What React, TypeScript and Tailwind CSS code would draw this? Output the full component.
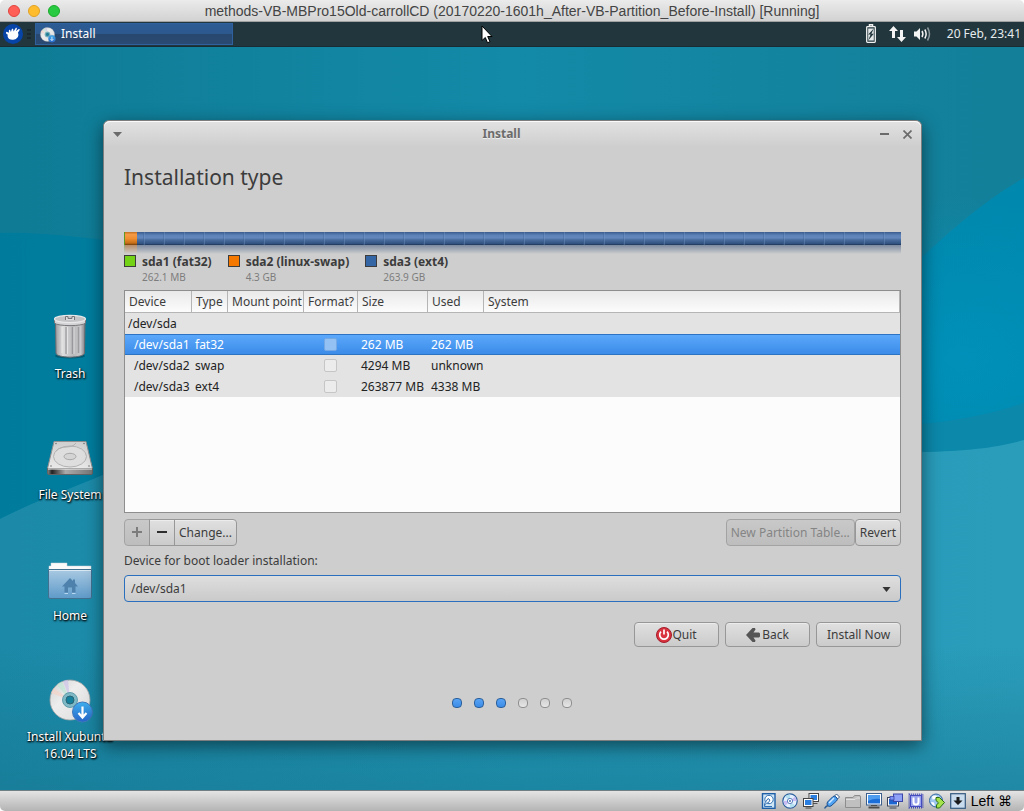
import { useId, useState, type ReactNode } from 'react';

const FONT = "font-['Noto_Sans',sans-serif]";
const MAC_FONT = "font-['Liberation_Sans','DejaVu_Sans',sans-serif]";

function Wallpaper() {
  return (
    <svg className="absolute inset-0 h-full w-full" viewBox="0 0 1024 743" preserveAspectRatio="none" aria-hidden="true">
      <defs>
        <linearGradient id="wpTop" x1="0" y1="0" x2="1" y2="0">
          <stop offset="0" stopColor="#0f7b95" />
          <stop offset="0.5" stopColor="#138aa8" />
          <stop offset="1" stopColor="#137f99" />
        </linearGradient>
        <linearGradient id="wpMid" x1="0" y1="0" x2="1" y2="0">
          <stop offset="0" stopColor="#007b9c" />
          <stop offset="0.5" stopColor="#0086a8" />
          <stop offset="1" stopColor="#0088ae" />
        </linearGradient>
        <linearGradient id="wpLowFade" x1="0" y1="0" x2="0" y2="1">
          <stop offset="0.6" stopColor="#14708a" stopOpacity="0" />
          <stop offset="1" stopColor="#14708a" stopOpacity="0.45" />
        </linearGradient>
        <linearGradient id="wpLow" x1="0" y1="0" x2="1" y2="0">
          <stop offset="0" stopColor="#1b89a7" />
          <stop offset="0.5" stopColor="#2198b6" />
          <stop offset="1" stopColor="#2a9dbb" />
        </linearGradient>
        <radialGradient id="wpGlow" cx="0.94" cy="0.42" r="0.22">
          <stop offset="0" stopColor="#0096c0" stopOpacity="0.6" />
          <stop offset="1" stopColor="#0096c0" stopOpacity="0" />
        </radialGradient>
      </defs>
      <rect width="1024" height="743" fill="url(#wpTop)" />
      <path d="M0 186C60 184 200 200 420 260C640 320 840 290 921 211C960 175 990 150 1024 131V743H0Z" fill="url(#wpMid)" />
      <rect width="1024" height="743" fill="url(#wpGlow)" />
      <path d="M0 472C40 452 75 440 110 425C300 340 780 390 921 377C970 372 1000 364 1024 356V743H0Z" fill="#0c88aa" />
      <path d="M0 472C40 452 75 440 110 425C300 350 780 400 921 405C970 404 1000 400 1024 393V743H0Z" fill="url(#wpLow)" />
      <path d="M0 472C40 452 75 440 110 425C300 350 780 400 921 405C970 404 1000 400 1024 393V743H0Z" fill="url(#wpLowFade)" />
    </svg>
  );
}

function TrashIcon() {
  return (
    <svg width="48" height="48" viewBox="0 0 48 48" aria-hidden="true">
      <defs>
        <linearGradient id="trBody" x1="0" y1="0" x2="1" y2="0">
          <stop offset="0" stopColor="#9b9b9f" />
          <stop offset="0.25" stopColor="#dededf" />
          <stop offset="0.6" stopColor="#b9b9bc" />
          <stop offset="0.85" stopColor="#c9c9cc" />
          <stop offset="1" stopColor="#7f7f85" />
        </linearGradient>
      </defs>
      <ellipse cx="24" cy="43" rx="15" ry="2.5" fill="#000" opacity="0.25" />
      <path d="M9.500 9L10 40C10 45.500 38 45.500 38.500 40L39 9Z" fill="url(#trBody)" stroke="#6c6c70" strokeWidth="1" />
      <path d="M20 14V41M26.500 14V41M32.500 14V40" stroke="#77777c" strokeWidth="1.500" opacity="0.5" />
      <path d="M21.500 14V41M28 14V41M16 14V40" stroke="#f3f3f3" strokeWidth="1" opacity="0.6" />
      <path d="M8.500 6.500V10C11 13.500 37 13.500 39.500 10V6.500Z" fill="#d4d4d6" stroke="#77777b" strokeWidth="1" />
      <ellipse cx="24" cy="6" rx="15.500" ry="3.600" fill="#c4c4c6" stroke="#e8e8ea" strokeWidth="1.200" />
      <path d="M19.500 7V3.500H22V5.500H26V3.500H28.500V7" fill="#dcdcde" stroke="#77777b" strokeWidth="1" />
    </svg>
  );
}

function DriveIcon() {
  return (
    <svg width="48" height="48" viewBox="0 0 48 48" aria-hidden="true">
      <defs>
        <linearGradient id="drTop" x1="0" y1="0" x2="0" y2="1">
          <stop offset="0" stopColor="#cfcfcf" />
          <stop offset="1" stopColor="#e9e9e9" />
        </linearGradient>
        <linearGradient id="drFront" x1="0" y1="0" x2="1" y2="0">
          <stop offset="0" stopColor="#8a8a8a" />
          <stop offset="0.1" stopColor="#222" />
          <stop offset="0.4" stopColor="#aaa" />
          <stop offset="1" stopColor="#777" />
        </linearGradient>
      </defs>
      <path d="M8 7.500H40L46.500 34.500H1.500Z" fill="url(#drTop)" stroke="#8f8f8f" />
      <ellipse cx="24" cy="22.500" rx="16.500" ry="10.500" fill="#dedede" stroke="#b3b3b3" />
      <ellipse cx="24" cy="22.500" rx="6" ry="3.200" fill="#d4d4d4" stroke="#a8a8a8" />
      <path d="M10 17C16 10 25 16 30 9" fill="none" stroke="#b0b0b0" />
      <path d="M1.500 34.500H46.500V39Q46.500 40.500 45 40.500H3Q1.500 40.500 1.500 39Z" fill="url(#drFront)" stroke="#636363" />
      <path d="M2 35H46" stroke="#f5f5f5" />
      <g fill="#777">
        <circle cx="10" cy="9.500" r="0.800" />
        <circle cx="38" cy="9.500" r="0.800" />
        <circle cx="5" cy="32" r="0.800" />
        <circle cx="43" cy="32" r="0.800" />
      </g>
    </svg>
  );
}

function HomeFolderIcon() {
  return (
    <svg width="48" height="48" viewBox="0 0 48 48" aria-hidden="true">
      <defs>
        <linearGradient id="foBody" x1="0" y1="0" x2="0" y2="1">
          <stop offset="0" stopColor="#a9c9e2" />
          <stop offset="1" stopColor="#5e9ac9" />
        </linearGradient>
      </defs>
      <path d="M3 16V11H5V8H21V11H45V16Z" fill="#fafafa" stroke="#c9d3da" strokeWidth="0.500" />
      <path d="M2.500 14.500H45.500V42Q45.500 43.500 44 43.500H4Q2.500 43.500 2.500 42Z" fill="url(#foBody)" stroke="#42708f" />
      <path d="M3 15.500H45" stroke="#d9e9f4" />
      <path d="M16 31.500L24 23L27 26V24.500H29V28L32 31.500H29.500V37.500H26V32.500H22V37.500H18.500V31.500Z" fill="#4e82ad" />
      <path d="M18.500 38.500H22M26 38.500H29.500" stroke="#b7d8f0" />
    </svg>
  );
}

function DiscIcon({ size }: { size: number }) {
  const id = useId();
  return (
    <svg width={size} height={size} viewBox="0 0 48 48" aria-hidden="true" className="shrink-0">
      <defs>
        <linearGradient id={`${id}d`} x1="0" y1="0" x2="1" y2="1">
          <stop offset="0" stopColor="#cfd0d0" />
          <stop offset="0.4" stopColor="#ededed" />
          <stop offset="1" stopColor="#dcdcdc" />
        </linearGradient>
        <linearGradient id={`${id}b`} x1="0" y1="0" x2="0" y2="1">
          <stop offset="0" stopColor="#3fb0ee" />
          <stop offset="1" stopColor="#2765c9" />
        </linearGradient>
      </defs>
      <circle cx="24" cy="24" r="20" fill={`url(#${id}d)`} stroke="#a5a5a5" strokeWidth="0.800" />
      <path d="M24 24L17 5A20 20 0 0 1 22 4Z" fill="#cfc4ea" opacity="0.7" />
      <path d="M24 24L11 9A20 20 0 0 1 16 5.500Z" fill="#bfe6d4" opacity="0.7" />
      <path d="M24 24L5 17A20 20 0 0 1 8 12Z" fill="#f3d3c8" opacity="0.7" />
      <circle cx="24" cy="24" r="7.500" fill="#7fb9c6" stroke="#4e8fa0" strokeWidth="0.800" />
      <circle cx="24" cy="24" r="4" fill="#16819c" stroke="#2b6575" />
      <circle cx="36.500" cy="36" r="10" fill={`url(#${id}b)`} stroke="#3f78bd" />
      <path d="M36.500 30.500V40M32.500 37L36.500 41.500L40.500 37" fill="none" stroke="#fff" strokeWidth="2.200" />
    </svg>
  );
}

function DesktopItem({ icon, children }: { icon: ReactNode; children: ReactNode }) {
  return (
    <a
      href="#desktop"
      className="flex flex-col items-center gap-1 text-center text-xs leading-[17px] text-white [text-shadow:1px_1px_2px_#000,0_1px_2px_#000]"
    >
      {icon}
      <span>{children}</span>
    </a>
  );
}

function MacTitleBar() {
  return (
    <header className="flex h-[22px] items-center border-b border-[#a2a2a2] bg-linear-to-b from-[#ebebeb] to-[#d2d2d2] px-2">
      <div className="flex w-16 gap-2">
        <button aria-label="Close" className="size-3 rounded-full border border-[#e0443e] bg-[#ff5f57]" />
        <button aria-label="Minimise" className="size-3 rounded-full border border-[#dfa023] bg-[#ffbd2e]" />
        <button aria-label="Zoom" className="size-3 rounded-full border border-[#1aab29] bg-[#28ca41]" />
      </div>
      <h1 className={`flex-1 text-center text-sm leading-5 whitespace-nowrap text-[#444] ${MAC_FONT}`}>
        methods-VB-MBPro15Old-carrollCD (20170220-1601h_After-VB-Partition_Before-Install) [Running]
      </h1>
      <div className="w-16" />
    </header>
  );
}

function Panel() {
  return (
    <nav className="relative flex h-[25px] items-center border-b border-[#1a2c33] bg-[#21363d] pr-[3px] pl-[3px] text-xs text-[#e6ecee]">
      <button aria-label="Applications menu" className="shrink-0">
        <svg width="20" height="20" viewBox="0 0 20 20">
          <circle cx="10" cy="10" r="10" fill="#0644a8" />
          <path
            d="M3 8.500C3.300 7.300 4.300 7.600 4.800 8.200L5.800 8.800L5.900 6.200C6.300 5.300 7.300 5.600 7.400 6.400L7.900 8L8.800 5.200C9.400 4.500 10.400 4.900 10.300 5.800L10.500 7.500L12.700 4C13.500 3.600 14.100 4.200 13.800 5L12.900 7.200L15.700 5C16.600 4.700 17 5.500 16.500 6.200L14.900 8.800C16.400 11.500 14.500 15 11.300 15.600C8 16.300 5.200 15.300 4.700 12.800C4.500 11.500 4.700 11 4.700 10.500C3.600 10.300 2.900 9.500 3 8.500Z"
            fill="#fff"
          />
        </svg>
      </button>
      <svg className="mx-1 shrink-0" width="4" height="10" viewBox="0 0 4 10" aria-hidden="true">
        <path d="M0 1H4M0 5H4M0 9H4" stroke="#16252a" strokeWidth="1.500" />
      </svg>
      <button className="flex h-[22px] w-[198px] items-center gap-[5px] border border-[#2e619d] bg-[linear-gradient(to_bottom,#2c5c95,#2c588d_50%,#29486f_50%,#2b4a73)] pl-[3px] text-white">
        <DiscIcon size={17} />
        <span className="leading-4">Install</span>
      </button>
      <div className="ml-auto flex items-center">
        <svg width="10" height="20" viewBox="0 0 10 20" aria-label="Battery charging" role="img">
          <path d="M3.500 2.500V0.800H6.500V2.500" fill="none" stroke="#f1f1f1" strokeWidth="1.500" />
          <rect x="0.700" y="2.700" width="8.600" height="15.600" rx="0.800" fill="none" stroke="#f1f1f1" strokeWidth="1.300" />
          <path d="M2.200 4.500H7.800V16.500H2.200Z" fill="#e4e8e9" />
          <path d="M7.800 4.500L2.200 10.500H4.600L2.200 16.500L7.800 9.800H5.400Z" fill="#21363d" />
        </svg>
        <svg className="ml-[13px]" width="17" height="18" viewBox="0 0 17 18" aria-label="Network" role="img">
          <path d="M4.500 1L9 6H6V13H3V6H0ZM12.500 17L17 12H14V5H11V12H8Z" fill="#f4f4f4" />
        </svg>
        <svg className="ml-2" width="18" height="16" viewBox="0 0 18 16" aria-label="Volume" role="img">
          <path d="M0 5.500H2.500L6 2V14L2.500 10.500H0Z" fill="#f4f4f4" />
          <path d="M8 5Q9.800 8 8 11" fill="none" stroke="#f4f4f4" strokeWidth="1.500" />
          <path d="M10.800 3.500Q13.500 8 10.800 12.500" fill="none" stroke="#f4f4f4" strokeWidth="1.500" />
          <path d="M13.500 1.500Q17.500 8 13.500 14.500" fill="none" stroke="#8b979b" strokeWidth="1.500" />
        </svg>
        <time className="ml-[15px] leading-4 whitespace-nowrap">20 Feb, 23:41</time>
      </div>
      <svg className="absolute top-[3px] left-[47%] z-10" width="12" height="19" viewBox="0 0 12 19" aria-hidden="true">
        <path d="M1 1V15.500L4.300 12.500L6.500 17.800L9 16.700L6.700 11.500H11Z" fill="#fff" stroke="#000" strokeWidth="1" />
      </svg>
    </nav>
  );
}

const BUTTON =
  'border border-[#979797] bg-linear-to-b from-[#e0e0e0] to-[#cbcbcb] text-[#3c3c3c] shadow-[inset_0_1px_0_#ececec] whitespace-nowrap';
const BUTTON_OFF =
  'border border-[#a3a3a3] bg-linear-to-b from-[#c9c9c9] to-[#bdbdbd] text-[#858585] whitespace-nowrap';

const BLUE = 'bg-[linear-gradient(to_bottom,#3a5c8d,#5c82b8_25%,#6488bc_45%,#4a6d9f_60%,#31527f_90%,#1c3152)]';
const GRID =
  'bg-[repeating-linear-gradient(to_right,transparent_0_6px,#3d6092_6px_7px,#7c9cc8_7px_8px,transparent_8px_20px)]';

function PartitionBar() {
  return (
    <div role="img" aria-label="Partition layout of /dev/sda">
      <div className="flex h-[13px]">
        <div className="w-px bg-[#5d9a23]" />
        <div className="w-3 bg-[linear-gradient(to_bottom,#c4701f,#f59a45_20%,#f08e31_50%,#c86f17_85%,#6e3d0c)]" />
        <div className={`flex-1 ${BLUE}`}>
          <div className={`h-full opacity-35 ${GRID}`} />
        </div>
      </div>
      <div className="flex h-[9px]">
        <div className="w-px bg-linear-to-b from-[#8fa878] to-[#cecece]" />
        <div className="w-3 bg-linear-to-b from-[#b88d66] to-[#cecece]" />
        <div className="flex-1 bg-linear-to-b from-[#7c8aa0] to-[#cecece]" />
      </div>
    </div>
  );
}

const LEGEND = [
  { name: 'sda1 (fat32)', size: '262.1 MB', swatch: 'bg-[#73d216]' },
  { name: 'sda2 (linux-swap)', size: '4.3 GB', swatch: 'bg-[#f57900]' },
  { name: 'sda3 (ext4)', size: '263.9 GB', swatch: 'bg-[#3465a4]' },
];

function Legend() {
  return (
    <ul className="flex gap-4">
      {LEGEND.map((item) => (
        <li key={item.name} className="flex gap-1.5">
          <span className={`mt-px size-3 border border-[#3c3c3c] ${item.swatch}`} />
          <div>
            <div className="text-xs leading-4 font-bold">{item.name}</div>
            <div className="text-[10px] leading-[14px] text-[#7d7d7d]">{item.size}</div>
          </div>
        </li>
      ))}
    </ul>
  );
}

const PARTITIONS = [
  { device: '/dev/sda1', type: 'fat32', size: '262 MB', used: '262 MB' },
  { device: '/dev/sda2', type: 'swap', size: '4294 MB', used: 'unknown' },
  { device: '/dev/sda3', type: 'ext4', size: '263877 MB', used: '4338 MB' },
];

const HEADERS = ['Device', 'Type', 'Mount point', 'Format?', 'Size', 'Used', 'System'];

function PartitionTable() {
  const [selected, setSelected] = useState('/dev/sda1');
  return (
    <div className="mt-1.5 min-h-[223px] border border-[#8e8e8e] bg-[#fcfcfc]">
      <table className="w-full table-fixed border-collapse text-left leading-4 text-[#222]">
        <colgroup>
          <col className="w-[67px]" />
          <col className="w-9" />
          <col className="w-[76px]" />
          <col className="w-[54px]" />
          <col className="w-[70px]" />
          <col className="w-14" />
          <col />
        </colgroup>
        <thead className="bg-linear-to-b from-[#e9e9e9] to-[#fdfdfd] text-[#3c3c3c]">
          <tr className="h-[22px]">
            {HEADERS.map((name) => (
              <th
                key={name}
                scope="col"
                className="p-0 pl-1 font-normal whitespace-nowrap shadow-[inset_-1px_-1px_0_#b5b5b5]"
              >
                {name}
              </th>
            ))}
          </tr>
        </thead>
        <tbody>
          <tr className="h-[21px] bg-[#e3e3e3]">
            <td className="p-0 pl-[3px]" colSpan={7}>
              /dev/sda
            </td>
          </tr>
          {PARTITIONS.map((row) => {
            const on = row.device === selected;
            return (
              <tr
                key={row.device}
                onClick={() => setSelected(row.device)}
                className={
                  on
                    ? 'h-[21px] bg-[linear-gradient(to_bottom,#2c73c4_1px,#5ba8fb_1px,#3b8be8_20px,#2c73c4_20px)] text-white'
                    : 'h-[21px] bg-[#e3e3e3]'
                }
              >
                <td className="p-0 pl-[9px] whitespace-nowrap">{row.device}</td>
                <td className="p-0 pl-[3px] whitespace-nowrap">{row.type}</td>
                <td className="p-0" />
                <td className="p-0 pr-0.5">
                  <input
                    type="checkbox"
                    disabled
                    aria-label={`Format ${row.device}`}
                    className={
                      on
                        ? 'mx-auto block size-[13px] appearance-none rounded-xs border border-[#75a9e6] bg-[#93c1f4]'
                        : 'mx-auto block size-[13px] appearance-none rounded-xs border border-[#c6c6c6] bg-[#ececec]'
                    }
                  />
                </td>
                <td className="p-0 pl-[3px] whitespace-nowrap">{row.size}</td>
                <td className="p-0 pl-[3px] whitespace-nowrap">{row.used}</td>
                <td className="p-0" />
              </tr>
            );
          })}
        </tbody>
      </table>
    </div>
  );
}

function InstallerWindow() {
  return (
    <main className="relative mt-[73px] mr-[102px] ml-[103px] rounded-t-md border border-[#7d7d7d] bg-[#cecece] pb-8 text-xs text-[#3c3c3c] shadow-[0_5px_18px_rgba(0,0,0,0.5)]">
      <div className="flex h-[26px] items-center rounded-t-md bg-linear-to-b from-[#e2e2e2] to-[#cecece] pr-[9px] pl-[9px] shadow-[inset_0_1px_0_#fbfbfb]">
        <button aria-label="Window menu" className="w-8">
          <svg width="9" height="5" viewBox="0 0 9 5">
            <path d="M0 0H9L4.500 5Z" fill="#6b6b6b" />
          </svg>
        </button>
        <h2 className="flex-1 text-center leading-4 font-bold text-[#6b6b6b] [text-shadow:0_1px_0_#eee]">Install</h2>
        <div className="flex w-[54px] items-center justify-end gap-3.5">
          <button aria-label="Minimise window">
            <svg width="9" height="9" viewBox="0 0 9 9">
              <path d="M0 4H9" stroke="#6b6b6b" strokeWidth="2" />
            </svg>
          </button>
          <button aria-label="Close window">
            <svg width="9" height="9" viewBox="0 0 9 9">
              <path d="M0.500 0.500L8.500 8.500M8.500 0.500L0.500 8.500" stroke="#6b6b6b" strokeWidth="1.700" />
            </svg>
          </button>
        </div>
      </div>
      <div className="px-5 pt-[15px]">
        <h3 className="mb-10 text-[21px] leading-[30px]">Installation type</h3>
        <PartitionBar />
        <Legend />
        <PartitionTable />
        <div className="mt-1.5 flex h-[27px] justify-between">
          <div className="flex">
            <button disabled aria-label="Add partition" className={`flex w-[26px] items-center justify-center rounded-l-sm ${BUTTON_OFF}`}>
              <svg width="11" height="11" viewBox="0 0 11 11">
                <path d="M0 5H10M5 0V10" stroke="#7c7c7c" strokeWidth="2" />
              </svg>
            </button>
            <button aria-label="Remove partition" className={`-ml-px flex w-[26px] items-center justify-center ${BUTTON}`}>
              <svg width="11" height="11" viewBox="0 0 11 11">
                <path d="M0 5H10" stroke="#2e2e2e" strokeWidth="2" />
              </svg>
            </button>
            <button className={`-ml-px rounded-r-sm px-1 ${BUTTON}`}>Change...</button>
          </div>
          <div className="flex">
            <button disabled className={`rounded-sm px-1 ${BUTTON_OFF}`}>
              New Partition Table...
            </button>
            <button className={`rounded-sm px-1 ${BUTTON}`}>Revert</button>
          </div>
        </div>
        <label htmlFor="bootloader" className="mt-[7px] mb-1.5 block leading-4">
          Device for boot loader installation:
        </label>
        <div className="relative">
          <select
            id="bootloader"
            defaultValue="/dev/sda1"
            className="block h-[27px] w-full appearance-none rounded-sm border border-[#2a6fbd] bg-linear-to-b from-[#dedede] to-[#cacaca] px-1.5 text-[#3c3c3c] outline-none"
          >
            <option>/dev/sda1</option>
            <option>/dev/sda2</option>
            <option>/dev/sda3</option>
          </select>
          <svg className="pointer-events-none absolute top-3 right-2.5" width="9" height="5" viewBox="0 0 9 5" aria-hidden="true">
            <path d="M0.500 0H8.500L4.500 5Z" fill="#333" />
          </svg>
        </div>
        <div className="mt-5 flex justify-end gap-1.5">
          <button className={`flex h-[25px] w-[85px] items-center justify-center rounded-sm ${BUTTON}`}>
            <svg width="16" height="16" viewBox="0 0 16 16" aria-hidden="true">
              <circle cx="8" cy="8" r="7.500" fill="#d9333f" stroke="#a51d2c" />
              <path d="M5 4.700A4.300 4.300 0 1 0 11 4.700M8 2.500V7.500" fill="none" stroke="#fff" strokeWidth="1.700" />
            </svg>
            Quit
          </button>
          <button className={`flex h-[25px] w-[85px] items-center justify-center gap-0.5 rounded-sm ${BUTTON}`}>
            <svg width="14" height="14" viewBox="0 0 14 14" aria-hidden="true">
              <path d="M0 7L6.500 0H9L9.500 1.500L7.500 4.500H13L14 5.500V8.500L13 9.500H7.500L9.500 12.500L9 14H6.500Z" fill="#555" />
            </svg>
            Back
          </button>
          <button className={`h-[25px] w-[85px] rounded-sm ${BUTTON}`}>Install Now</button>
        </div>
        <div className="mt-[51px] flex justify-center gap-3 pr-0.5" role="img" aria-label="Step 3 of 6">
          {[1, 2, 3, 4, 5, 6].map((step) => (
            <span
              key={step}
              className={
                step <= 3
                  ? 'size-2.5 rounded-[4px] border border-[#2c5f9b] bg-linear-to-b from-[#58a4f5] to-[#3b8be6]'
                  : 'size-2.5 rounded-[4px] border border-[#8f8f8f] bg-linear-to-b from-[#d0d0d0] to-[#e6e6e6]'
              }
            />
          ))}
        </div>
      </div>
    </main>
  );
}

function StatusIcon({ label, children }: { label: string; children: ReactNode }) {
  return (
    <button aria-label={label}>
      <svg width="16" height="16" viewBox="0 0 16 16">
        {children}
      </svg>
    </button>
  );
}

function StatusBar() {
  return (
    <footer className={`flex h-[21px] items-center justify-end gap-[5px] border-t border-[#6f7f84] bg-linear-to-b from-[#e4e4e4] to-[#b4b4b4] pr-3 text-sm text-black ${MAC_FONT}`}>
      <StatusIcon label="Hard disks">
        <rect x="1.500" y="0.700" width="12.500" height="14.600" fill="#cfe6f7" stroke="#1f5fa8" strokeWidth="1.400" />
        <circle cx="8" cy="6.500" r="4.200" fill="#fff" stroke="#2f6fb3" />
        <path d="M3.500 13.500C4 10 6 10 7.500 9.500L9 7L7 5.500L5 8.500C3.500 10 3.500 12 3.500 13.500Z" fill="#fff" stroke="#2f6fb3" />
        <path d="M4 13.500H11" stroke="#2f6fb3" />
      </StatusIcon>
      <StatusIcon label="Optical drives">
        <circle cx="8" cy="8" r="7.200" fill="#e4effd" stroke="#2c5f9d" strokeWidth="1.200" />
        <path d="M8 8L3 3.500A7 7 0 0 1 8 1.500ZM8 8L13 12.500A7 7 0 0 1 8 14.500Z" fill="#b4e0f0" />
        <path d="M8 8L13 3.500A7 7 0 0 1 14.500 8ZM8 8L1.500 8A7 7 0 0 0 3.500 12.500Z" fill="#c9bbf2" />
        <circle cx="8" cy="8" r="2.600" fill="#fff" stroke="#5a7fc0" />
        <circle cx="8" cy="8" r="1" fill="#3c6fb4" />
      </StatusIcon>
      <StatusIcon label="Network">
        <rect x="6" y="0.500" width="9.500" height="8" fill="#fff" stroke="#444" />
        <rect x="7.500" y="2" width="6.500" height="5" fill="#2a7ee0" />
        <path d="M10 10.500H14.500" stroke="#555" />
        <rect x="0.500" y="5.500" width="9.500" height="8" fill="#fff" stroke="#444" />
        <rect x="2" y="7" width="6.500" height="5" fill="#2a7ee0" />
        <path d="M2.500 15H8.500" stroke="#444" />
      </StatusIcon>
      <StatusIcon label="USB devices">
        <path d="M10.500 3L12.500 1L15.500 4L13.500 6Z" fill="#fff" stroke="#2b4d74" strokeWidth="0.900" />
        <path d="M3.500 9L9 3.500Q10.500 2.500 12 4L13 5Q14 6.500 12.500 8L7 13Q5 14 3.500 12.500Q2.500 11 3.500 9Z" fill="#4fa3f2" stroke="#1c4f8e" />
        <path d="M5 10L10 5" stroke="#cfe8ff" strokeWidth="1.500" />
        <path d="M4 12.500Q2 13 0.500 15.500" fill="none" stroke="#2b5c94" strokeWidth="1.400" />
      </StatusIcon>
      <StatusIcon label="Shared folders">
        <path d="M0.500 14.500V4.500H8L9.500 2.500H15L15.500 4V14.500Z" fill="#c0c0c0" stroke="#8d8d8d" />
        <path d="M1 6.500H10L11.500 5H15" fill="none" stroke="#e2e2e2" />
      </StatusIcon>
      <StatusIcon label="Display">
        <rect x="0.500" y="0.500" width="15" height="11.500" fill="#fff" stroke="#3d5f8c" />
        <rect x="2" y="2" width="12" height="8.500" fill="#1c6fd8" />
        <path d="M2 2H14V6Q8 5 2 8Z" fill="#4d9cf0" />
        <path d="M5 12.500H11" stroke="#4d4d4d" />
        <path d="M2.500 14.500H13.500" stroke="#4d4d4d" strokeWidth="2" />
      </StatusIcon>
      <StatusIcon label="Seamless mode">
        <rect x="0.500" y="4.500" width="11" height="8.500" fill="#fff" stroke="#3c4656" />
        <rect x="2" y="6" width="8" height="5.500" fill="#1c66d2" />
        <path d="M2.500 15H9.500" stroke="#3c4656" />
        <rect x="6.500" y="1" width="9" height="7.500" fill="#8fa0f7" stroke="#3b47a8" />
        <rect x="3" y="3.500" width="4" height="3.500" fill="#7d92f5" stroke="#3b47a8" strokeWidth="0.800" />
      </StatusIcon>
      <StatusIcon label="Processor">
        <rect x="1.200" y="1.200" width="13.600" height="13.600" fill="none" stroke="#4048b4" strokeWidth="1.600" strokeDasharray="1 1" />
        <rect x="2.500" y="2.500" width="11" height="11" fill="#98a2ec" stroke="#444cc0" />
        <path d="M5.500 4.500V9Q5.500 11.500 8 11.500Q10.500 11.500 10.500 9V4.500" fill="none" stroke="#fff" strokeWidth="2" />
      </StatusIcon>
      <StatusIcon label="Mouse integration">
        <circle cx="7" cy="7.500" r="6.500" fill="#9cc6ee" stroke="#35689f" />
        <path d="M3 3.500Q6 2 8 3L6.500 6L3.500 6.500ZM2 9L5 9.500L6 13Q3 12.500 2 9Z" fill="#fff" />
        <path d="M7 4.500H10.500L15.500 9.500L10.500 15H7.500V12L9.500 9.800L7 7.500Z" fill="#a4e34c" stroke="#2c6d16" />
      </StatusIcon>
      <StatusIcon label="Keyboard capture">
        <rect x="0.700" y="0.700" width="14.600" height="14.600" fill="#c8dced" stroke="#33587f" strokeWidth="1.200" />
        <path d="M6.500 4H9.500V7.500H12.500L8 12L3.500 7.500H6.500Z" fill="#1b1b1b" />
      </StatusIcon>
      <span className="leading-4 whitespace-nowrap">Left ⌘</span>
    </footer>
  );
}

export default function App() {
  return (
    <div className="min-h-screen bg-white">
      <div className={`flex min-h-screen flex-col overflow-hidden rounded-[5px] ${FONT}`}>
        <MacTitleBar />
        <Panel />
        <section id="desktop" className="relative flex-1 overflow-hidden pb-12">
          <Wallpaper />
          <div className="absolute top-[266px] left-0 flex w-[140px] flex-col gap-[52px]">
            <DesktopItem icon={<TrashIcon />}>Trash</DesktopItem>
            <DesktopItem icon={<DriveIcon />}>File System</DesktopItem>
            <DesktopItem icon={<HomeFolderIcon />}>Home</DesktopItem>
            <DesktopItem icon={<DiscIcon size={48} />}>
              Install Xubuntu
              <br />
              16.04 LTS
            </DesktopItem>
          </div>
          <InstallerWindow />
        </section>
        <StatusBar />
      </div>
    </div>
  );
}
